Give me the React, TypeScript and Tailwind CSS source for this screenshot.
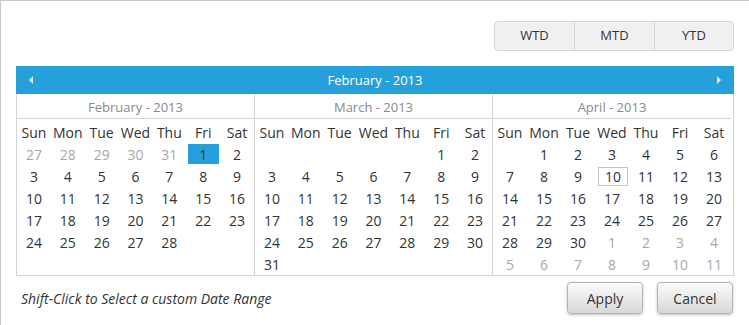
import React from "react";

type Cell = { d: number | null; g?: boolean; sel?: boolean; today?: boolean };

const n = (arr: (number | null)[], opts: Partial<Cell> = {}): Cell[] =>
  arr.map((d) => ({ d, ...opts }));

const feb: Cell[][] = [
  [...n([27, 28, 29, 30, 31], { g: true }), { d: 1, sel: true }, { d: 2 }],
  n([3, 4, 5, 6, 7, 8, 9]),
  n([10, 11, 12, 13, 14, 15, 16]),
  n([17, 18, 19, 20, 21, 22, 23]),
  n([24, 25, 26, 27, 28, null, null]),
  n([null, null, null, null, null, null, null]),
];

const mar: Cell[][] = [
  n([null, null, null, null, null, 1, 2]),
  n([3, 4, 5, 6, 7, 8, 9]),
  n([10, 11, 12, 13, 14, 15, 16]),
  n([17, 18, 19, 20, 21, 22, 23]),
  n([24, 25, 26, 27, 28, 29, 30]),
  n([31, null, null, null, null, null, null]),
];

const apr: Cell[][] = [
  n([null, 1, 2, 3, 4, 5, 6]),
  [...n([7, 8, 9]), { d: 10, today: true }, ...n([11, 12, 13])],
  n([14, 15, 16, 17, 18, 19, 20]),
  n([21, 22, 23, 24, 25, 26, 27]),
  [...n([28, 29, 30]), ...n([1, 2, 3, 4], { g: true })],
  n([5, 6, 7, 8, 9, 10, 11], { g: true }),
];

const days = ["Sun", "Mon", "Tue", "Wed", "Thu", "Fri", "Sat"];

function Month({ title, rows, last }: { title: string; rows: Cell[][]; last?: boolean }) {
  return (
    <div className={`w-[238px] ${last ? "" : "border-r border-[#d4d4d4]"}`}>
      <div className="h-[25px] pt-[3px] border-b border-[#d4d4d4] flex items-center justify-center text-[13px] text-[#8a8a8a]">
        {title}
      </div>
      <div className="grid grid-cols-7 h-[24px] pt-[2px] items-center text-[14px] text-[#333]">
        {days.map((d) => (
          <div key={d} className="text-center">
            {d}
          </div>
        ))}
      </div>
      {rows.map((r, i) => (
        <div key={i} className="grid grid-cols-7 h-[22px] text-[14px]">
          {r.map((c, j) => (
            <div key={j} className="flex items-center justify-center">
              {c.d !== null && (
                <span
                  className={`flex items-center justify-center ${
                    c.sel
                      ? "w-[31px] h-[20px] bg-[#26a0da] text-[#333]"
                      : c.today
                      ? "w-[30px] h-[19px] ml-[2px] border border-[#c4c4c4] text-[#333]"
                      : c.g
                      ? "text-[#a8a8a8]"
                      : "text-[#333]"
                  }`}
                >
                  {c.d}
                </span>
              )}
            </div>
          ))}
        </div>
      ))}
    </div>
  );
}

export default function App() {
  return (
    <div
      className="w-[749px] h-[325px] bg-white border-t border-l border-[#c8c8c8] overflow-hidden"
      style={{ fontFamily: '"Open Sans", "Noto Sans", sans-serif' }}
    >
      <div className="flex justify-end pr-[15px] pt-[20px]">
        <div className="flex h-[30px] rounded-[4px] border border-[#d6d6d6] bg-[#f0f0f0] text-[13px] text-[#333]">
          <div className="w-[80px] flex items-center justify-center border-r border-[#dadada]">WTD</div>
          <div className="w-[80px] flex items-center justify-center border-r border-[#dadada]">MTD</div>
          <div className="w-[78px] flex items-center justify-center">YTD</div>
        </div>
      </div>
      <div className="ml-[15px] mt-[15px] w-[718px]">
        <div className="h-[28px] bg-[#26a0da] flex items-center justify-between px-[13px] text-white text-[13px]">
          <svg width="5" height="8" viewBox="0 0 5 8">
            <path d="M4 0 L0 4 L4 8 Z" fill="#d6eefa" />
          </svg>
          <span className="pt-[1px]">February - 2013</span>
          <svg width="5" height="8" viewBox="0 0 5 8">
            <path d="M1 0 L5 4 L1 8 Z" fill="#d6eefa" />
          </svg>
        </div>
        <div className="flex border-x border-b border-[#d4d4d4]">
          <Month title="February - 2013" rows={feb} />
          <Month title="March - 2013" rows={mar} />
          <Month title="April - 2013" rows={apr} last />
        </div>
      </div>
      <div className="flex items-center justify-between pl-[20px] pr-[16px] mt-[6px]">
        <span className="italic text-[14px] text-[#333]">Shift-Click to Select a custom Date Range</span>
        <div className="flex gap-[14px]">
          <button className="w-[76px] h-[32px] rounded-[4px] border border-[#b4b4b4] bg-gradient-to-b from-[#fbfbfb] to-[#d8d8d8] shadow-[0_1px_3px_rgba(0,0,0,0.25)] text-[14px] text-[#333]">
            Apply
          </button>
          <button className="w-[76px] h-[32px] rounded-[4px] border border-[#b4b4b4] bg-gradient-to-b from-[#fbfbfb] to-[#d8d8d8] shadow-[0_1px_3px_rgba(0,0,0,0.25)] text-[14px] text-[#333]">
            Cancel
          </button>
        </div>
      </div>
    </div>
  );
}
